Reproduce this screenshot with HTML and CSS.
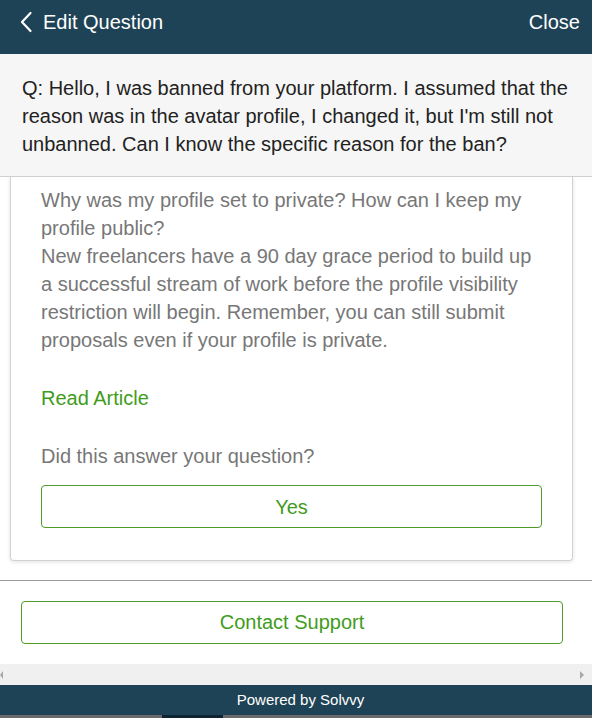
FILE: index.html
```html
<!DOCTYPE html>
<html>
<head>
<meta charset="utf-8">
<link rel="stylesheet" href="styles.css">
</head>
<body>
<div class="app">
  <header class="topbar">
    <div class="back">
      <svg class="chev" width="14" height="22" viewBox="0 0 14 22"><path d="M11.5 2 L3 11 L11.5 20" fill="none" stroke="#fff" stroke-width="2.2" stroke-linecap="round" stroke-linejoin="round"/></svg>
      <span>Edit Question</span>
    </div>
    <span class="close">Close</span>
  </header>
  <section class="question">Q: Hello, I was banned from your platform. I assumed that the reason was in the avatar profile, I changed it, but I'm still not unbanned. Can I know the specific reason for the ban?</section>
  <section class="results">
    <div class="card">
      <div class="answer">
        <div>Why was my profile set to private? How can I keep my profile public?</div>
        <div>New freelancers have a 90 day grace period to build up a successful stream of work before the profile visibility restriction will begin. Remember, you can still submit proposals even if your profile is private.</div>
      </div>
      <div class="read">Read Article</div>
      <div class="ask">Did this answer your question?</div>
      <div class="btn">Yes</div>
    </div>
  </section>
  <section class="contact">
    <div class="btn">Contact Support</div>
  </section>
  <div class="hscroll">
    <span class="arr left"></span>
    <span class="arr right"></span>
  </div>
  <footer class="footer">Powered by Solvvy</footer>
  <div class="strip"><span class="seg"></span></div>
</div>
</body>
</html>
```

FILE: styles.css
```css
* { box-sizing: border-box; }
html, body { margin: 0; padding: 0; }
body {
  font-family: "Liberation Sans", Arial, sans-serif;
  background: #fff;
  width: 592px;
  height: 718px;
  overflow: hidden;
}
.app { display: flex; flex-direction: column; height: 718px; }
.topbar {
  height: 54px;
  background: #1f4356;
  color: #fff;
  display: flex;
  justify-content: space-between;
  align-items: flex-start;
  padding: 8px 12px 0 19px;
  font-size: 20px;
  line-height: 28px;
}
.back { display: flex; align-items: center; gap: 10px; }
.chev { display: block; margin-top: -1px; }
.question {
  height: 123px;
  background: #f6f6f6;
  border-bottom: 1px solid #cfcfcf;
  padding: 20px 16px 0 22px;
  font-size: 20px;
  line-height: 28px;
  color: #222;
}
.results {
  height: 403px;
  overflow: hidden;
  padding: 0 19px 0 10px;
}
.card {
  background: #fff;
  border: 1px solid #d2d2d2;
  border-top: none;
  border-radius: 0 0 4px 4px;
  box-shadow: 0 1px 4px rgba(0,0,0,0.12);
  padding: 9px 30px 32px 30px;
  font-size: 20px;
  line-height: 28px;
  color: #777;
}
.read { color: #3f9c1c; margin-top: 30px; }
.ask { margin-top: 30px; }
.btn {
  height: 43px;
  border: 1px solid #4e9b2b;
  border-radius: 4px;
  color: #3f9c1c;
  font-size: 20px;
  display: flex;
  align-items: center;
  justify-content: center;
}
.card .btn { margin-top: 15px; }
.contact {
  height: 84px;
  border-top: 1px solid #9c9c9c;
  padding: 20px 29px 0 21px;
}
.hscroll {
  height: 21px;
  background: #f0f0f0;
  position: relative;
}
.arr {
  position: absolute;
  top: 7px;
  width: 0; height: 0;
  border-top: 4px solid transparent;
  border-bottom: 4px solid transparent;
}
.arr.left { left: 0; border-right: 3px solid #a8a8a8; }
.arr.right { left: 580px; border-left: 4px solid #a8a8a8; }
.footer {
  height: 30px;
  background: #1f4356;
  color: #fff;
  font-size: 15px;
  line-height: 30px;
  text-align: center;
  padding-left: 9px;
}
.strip {
  height: 3px;
  background: #6a6a6a;
  padding-left: 162px;
}
.seg { display: block; width: 61px; height: 3px; background: #0e2430; }
```
